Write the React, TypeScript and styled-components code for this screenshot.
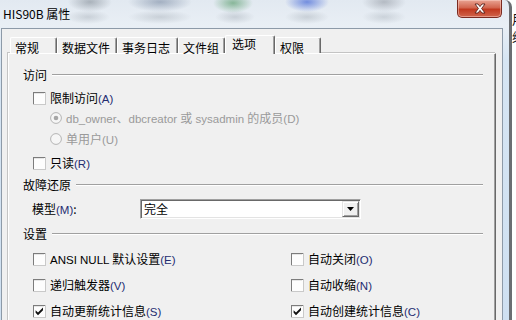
import React from 'react';
import styled, { createGlobalStyle } from 'styled-components';

const GlobalStyle = createGlobalStyle`
  html, body {
    margin: 0;
    padding: 0;
    background: #fff;
  }
  body {
    font-family: "Noto Sans CJK SC", "Liberation Sans", sans-serif;
    font-size: 12px;
    color: #000;
  }
`;

const Screen = styled.div`
  width: 516px;
  height: 320px;
  overflow: hidden;
  display: flex;
  background: #fff;
`;

const Window = styled.div`
  width: 509px;
  flex: none;
  display: flex;
  flex-direction: column;
  border-right: 3px solid #6b6e72;
  border-top-right-radius: 7px;
  background: linear-gradient(#e2e9f1, #e9eff5 26px, #d6e5f3 60px, #cfe0f1);
`;

const TitleBar = styled.div`
  height: 28px;
  flex: none;
  display: flex;
  align-items: center;
  background:
    radial-gradient(ellipse 22px 10px at 90px 2px, rgba(100, 110, 120, 0.45), transparent),
    radial-gradient(ellipse 22px 7px at 88px 17px, rgba(130, 140, 150, 0.3), transparent),
    radial-gradient(ellipse 32px 10px at 160px 2px, rgba(85, 105, 135, 0.45), transparent),
    radial-gradient(ellipse 32px 7px at 160px 17px, rgba(130, 140, 150, 0.3), transparent),
    radial-gradient(ellipse 20px 10px at 233px 3px, rgba(60, 140, 80, 0.55), transparent),
    radial-gradient(ellipse 20px 7px at 235px 17px, rgba(130, 140, 150, 0.3), transparent),
    radial-gradient(ellipse 22px 10px at 307px 2px, rgba(40, 80, 210, 0.6), transparent),
    radial-gradient(ellipse 22px 7px at 307px 17px, rgba(130, 140, 150, 0.3), transparent),
    radial-gradient(ellipse 22px 10px at 384px 2px, rgba(110, 115, 125, 0.4), transparent),
    radial-gradient(ellipse 22px 7px at 384px 17px, rgba(130, 140, 150, 0.28), transparent);
`;

const Title = styled.span`
  padding-left: 3px;
  font-size: 12px;
  line-height: 16px;
  color: #000;
`;

const CloseButton = styled.div`
  align-self: flex-start;
  margin-left: auto;
  margin-right: 7px;
  width: 45px;
  height: 18px;
  box-sizing: border-box;
  display: flex;
  align-items: center;
  justify-content: center;
  border: 1px solid #7a2a20;
  border-top: none;
  border-radius: 0 0 5px 5px;
  background: linear-gradient(#e9a493, #d2664f 45%, #c1391f 55%, #d0654c);
  box-shadow: inset 0 0 0 1px rgba(255, 220, 210, 0.45);
`;

const Client = styled.div`
  flex: 1;
  margin-left: 1px;
  margin-right: 6px;
  display: flex;
  flex-direction: column;
  background: #f0f0f0;
  border: 1px solid #8d9aa8;
  border-bottom: none;
  padding: 6px 6px 0 6px;
  min-height: 0;
`;

const TabStrip = styled.div`
  height: 18px;
  flex: none;
  display: flex;
  align-items: flex-end;
  padding-left: 2px;
  position: relative;
  z-index: 1;
`;

const Tab = styled.div<{ $w: number; $active?: boolean }>`
  width: ${(p) => p.$w}px;
  height: ${(p) => (p.$active ? 19 : 16)}px;
  margin-bottom: ${(p) => (p.$active ? -1 : 0)}px;
  box-sizing: border-box;
  padding-left: ${(p) => (p.$active ? 6 : 4)}px;
  padding-top: ${(p) => (p.$active ? 0 : 2)}px;
  background: #f0f0f0;
  border-top: 1px solid #fff;
  border-left: 1px solid #fff;
  border-right: 1px solid #696969;
  box-shadow: inset -1px 0 0 #a0a0a0;
  border-radius: 2px 2px 0 0;
  font-size: 12px;
  line-height: 15px;
  white-space: nowrap;
`;

const TabPanel = styled.div`
  flex: 1;
  box-sizing: border-box;
  border-top: 1px solid #fff;
  border-left: 1px solid #fff;
  border-right: 1px solid #696969;
  box-shadow: inset -1px 0 0 #a0a0a0, -1px -1px 0 #c4c4c4;
  padding: 10px 12px 0 14px;
  display: flex;
  flex-direction: column;
`;

const GroupHeader = styled.div<{ $h: number }>`
  height: ${(p) => p.$h}px;
  display: flex;
  align-items: center;
  gap: 5px;
  line-height: 16px;
`;

const Rule = styled.div`
  flex: 1;
  height: 0;
  border-top: 1px solid #a0a0a0;
  border-bottom: 1px solid #fff;
`;

const OptionRow = styled.div<{ $h: number; $indent: number; $disabled?: boolean }>`
  height: ${(p) => p.$h}px;
  padding-left: ${(p) => p.$indent}px;
  display: flex;
  align-items: center;
  gap: 4px;
  line-height: 16px;
  white-space: nowrap;
  color: ${(p) => (p.$disabled ? '#9a9a9a' : '#000')};
`;

const Key = styled.span<{ $disabled?: boolean }>`
  font-family: "Liberation Sans", sans-serif;
  font-size: 11.5px;
  color: ${(p) => (p.$disabled ? 'inherit' : '#242c70')};
`;

const Latin = styled.span`
  font-family: "Liberation Sans", sans-serif;
  font-size: 11.5px;
`;

const ModelLabel = styled.span`
  width: 104px;
  flex: none;
`;

const ComboBox = styled.div`
  width: 221px;
  height: 20px;
  box-sizing: border-box;
  display: flex;
  align-items: center;
  background: #fff;
  border-top: 1px solid #a0a0a0;
  border-left: 1px solid #a0a0a0;
  border-right: 1px solid #fff;
  border-bottom: 1px solid #fff;
  box-shadow: inset 1px 1px 0 #696969, inset -1px -1px 0 #e3e3e3;
  padding: 1px 1px 1px 3px;
`;

const ComboText = styled.span`
  flex: 1;
  color: #000;
`;

const DropButton = styled.div`
  width: 17px;
  height: 16px;
  box-sizing: border-box;
  display: flex;
  align-items: center;
  justify-content: center;
  background: #f0f0f0;
  border-top: 1px solid #e3e3e3;
  border-left: 1px solid #e3e3e3;
  border-right: 1px solid #696969;
  border-bottom: 1px solid #696969;
  box-shadow: inset 1px 1px 0 #fff, inset -1px -1px 0 #a0a0a0;
`;

const SettingsGrid = styled.div`
  display: grid;
  grid-template-columns: 258px 1fr;
  grid-auto-rows: 26px;
  padding-left: 10px;
`;

const Side = styled.div`
  flex: 1;
  padding-top: 10px;
  font-size: 13px;
  line-height: 18px;
  overflow: hidden;
  white-space: nowrap;
  color: #111;
`;

const CheckBox = ({ checked }: { checked?: boolean }) => (
  <svg width="13" height="13" viewBox="0 0 13 13" style={{ flex: 'none' }}>
    <rect x="0" y="0" width="13" height="13" fill="#c9c9c9" />
    <rect x="0" y="0" width="12" height="12" fill="#7c7c7c" />
    <rect x="1" y="1" width="11" height="11" fill="#fdfdfd" />
    <rect x="1" y="1" width="10" height="1" fill="#e6e6e6" />
    {checked && (
      <path d="M2.6 5.2 L5 7.6 L10 2.6 L10 5.2 L5 10.2 L2.6 7.8 Z" fill="#111" />
    )}
  </svg>
);

const Radio = ({ checked }: { checked?: boolean }) => (
  <svg width="12" height="12" viewBox="0 0 12 12" style={{ flex: 'none' }}>
    <circle cx="6" cy="6" r="5.4" fill="#f6f6f6" stroke="#b4b4b4" strokeWidth="1" />
    {checked && <circle cx="6" cy="6" r="2.3" fill="#a6a6a6" />}
  </svg>
);

const CloseGlyph = () => (
  <svg width="16" height="11" viewBox="0 0 16 11">
    <path
      d="M3 1 L6 1 L8 3.6 L10 1 L13 1 L9.6 5.5 L13 10 L10 10 L8 7.4 L6 10 L3 10 L6.4 5.5 Z"
      fill="#fff"
      stroke="#5a2018"
      strokeWidth="0.9"
      strokeLinejoin="round"
    />
  </svg>
);

const DropArrow = () => (
  <svg width="7" height="4" viewBox="0 0 7 4">
    <path d="M0 0 H7 L3.5 4 Z" fill="#000" />
  </svg>
);

const tabs = [
  { label: '常规', w: 47 },
  { label: '数据文件', w: 60 },
  { label: '事务日志', w: 61 },
  { label: '文件组', w: 47 },
  { label: '选项', w: 50, active: true },
  { label: '权限', w: 46 },
];

interface Setting {
  label: React.ReactNode;
  key: string;
  checked?: boolean;
}

const settings: Setting[] = [
  { label: <><Latin>ANSI NULL </Latin>默认设置</>, key: 'E' },
  { label: '自动关闭', key: 'O' },
  { label: '递归触发器', key: 'V' },
  { label: '自动收缩', key: 'N' },
  { label: '自动更新统计信息', key: 'S', checked: true },
  { label: '自动创建统计信息', key: 'C', checked: true },
];

const App = () => {
  return (
    <>
      <GlobalStyle />
      <Screen>
        <Window>
          <TitleBar>
            <Title>HIS90B 属性</Title>
            <CloseButton>
              <CloseGlyph />
            </CloseButton>
          </TitleBar>
          <Client>
            <TabStrip>
              {tabs.map((t) => (
                <Tab key={t.label} $w={t.w} $active={t.active}>
                  {t.label}
                </Tab>
              ))}
            </TabStrip>
            <TabPanel>
              <GroupHeader $h={22}>
                访问
                <Rule />
              </GroupHeader>
              <OptionRow $h={24} $indent={10}>
                <CheckBox />
                <span>
                  限制访问<Key>(A)</Key>
                </span>
              </OptionRow>
              <OptionRow $h={16} $indent={27} $disabled>
                <Radio checked />
                <span>
                  <Latin>db_owner</Latin>、<Latin>dbcreator </Latin>或<Latin> sysadmin </Latin>的成员
                  <Key $disabled>(D)</Key>
                </span>
              </OptionRow>
              <OptionRow $h={26} $indent={27} $disabled>
                <Radio />
                <span>
                  单用户<Key $disabled>(U)</Key>
                </span>
              </OptionRow>
              <OptionRow $h={22} $indent={10}>
                <CheckBox />
                <span>
                  只读<Key>(R)</Key>
                </span>
              </OptionRow>
              <GroupHeader $h={22}>
                故障还原
                <Rule />
              </GroupHeader>
              <OptionRow $h={26} $indent={9}>
                <ModelLabel>
                  模型<Key>(M)</Key>:
                </ModelLabel>
                <ComboBox>
                  <ComboText>完全</ComboText>
                  <DropButton>
                    <DropArrow />
                  </DropButton>
                </ComboBox>
              </OptionRow>
              <GroupHeader $h={24}>
                设置
                <Rule />
              </GroupHeader>
              <SettingsGrid>
                {settings.map((s) => (
                  <OptionRow key={s.key} $h={26} $indent={0}>
                    <CheckBox checked={s.checked} />
                    <span>
                      {s.label}
                      <Key>({s.key})</Key>
                    </span>
                  </OptionRow>
                ))}
              </SettingsGrid>
            </TabPanel>
          </Client>
        </Window>
        <Side>
          用<br />缘
        </Side>
      </Screen>
    </>
  );
};

export default App;
